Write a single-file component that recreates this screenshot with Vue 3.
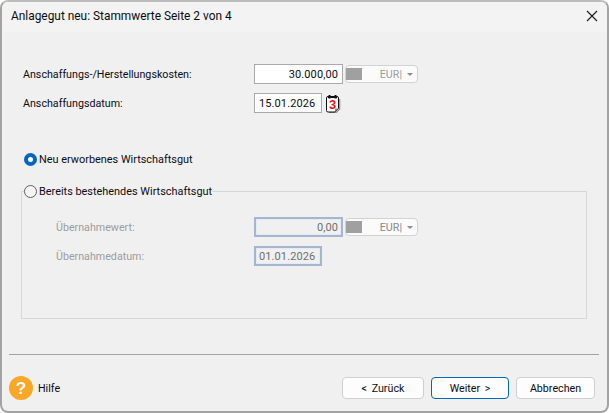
<script setup>
const buttons = [
  { label: "< Zurück", cls: "btn--back" },
  { label: "Weiter >", cls: "btn--next" },
  { label: "Abbrechen", cls: "btn--cancel" },
];
</script>

<template>
  <div class="win">
    <header class="win__title">
      <span>Anlagegut neu: Stammwerte Seite 2 von 4</span>
      <svg class="win__close" width="12" height="12" viewBox="0 0 12 12">
        <path d="M1 1L11 11M11 1L1 11" stroke="#1a1a1a" stroke-width="1.1" fill="none" />
      </svg>
    </header>

    <main class="win__body">
      <div class="row row--first">
        <label class="row__label">Anschaffungs-/Herstellungskosten:</label>
        <div class="field field--money">30.000,00</div>
        <div class="combo">
          <i class="combo__swatch"></i>
          <span class="combo__text">EUR|</span>
          <i class="combo__arrow"></i>
        </div>
      </div>
      <div class="row row--date">
        <label class="row__label">Anschaffungsdatum:</label>
        <div class="field field--date">15.01.2026</div>
        <svg class="cal" width="18" height="20" viewBox="0 0 18 20">
          <path d="M15.7 6V16L12 19.7H5" fill="none" stroke="#8f8f8f" stroke-width="1.2" />
          <path d="M2.5 5Q2.5 3.5 4 3.5H13Q14.5 3.5 14.5 5V15.5L11 19H4Q2.5 19 2.5 17.5Z" fill="#fff" stroke="#111" stroke-width="1" />
          <path d="M11 19V15.5H14.5Z" fill="#8a8a8a" />
          <path d="M4 4.2H13" stroke="#111" stroke-width="1.4" />
          <path d="M5.5 2V5.5M11.5 2V5.5" stroke="#111" stroke-width="2" />
          <text x="8.5" y="15.5" class="cal__num">3</text>
        </svg>
      </div>

      <div class="radio radio--new">
        <i class="radio__dot radio__dot--on"></i>
        <span class="radio__text">Neu erworbenes Wirtschaftsgut</span>
      </div>

      <fieldset class="group">
        <legend class="radio radio--old">
          <i class="radio__dot"></i>
          <span class="radio__text">Bereits bestehendes Wirtschaftsgut</span>
        </legend>
        <div class="row row--off">
          <label class="row__label row__label--sub">Übernahmewert:</label>
          <div class="field field--money field--off">0,00</div>
          <div class="combo combo--off">
            <i class="combo__swatch"></i>
            <span class="combo__text">EUR|</span>
            <i class="combo__arrow"></i>
          </div>
        </div>
        <div class="row row--off row--off2">
          <label class="row__label row__label--sub">Übernahmedatum:</label>
          <div class="field field--date field--off">01.01.2026</div>
        </div>
      </fieldset>

      <hr class="sep" />

      <footer class="foot">
        <div class="help">
          <svg width="24" height="24" viewBox="0 0 24 24">
            <circle cx="12" cy="12" r="12" fill="#f9a726" />
            <text x="12" y="18" class="help__mark">?</text>
          </svg>
          <span>Hilfe</span>
        </div>
        <div class="foot__btns">
          <button v-for="b in buttons" :key="b.label" type="button" class="btn" :class="b.cls">
            {{ b.label }}
          </button>
        </div>
      </footer>
    </main>
  </div>
</template>

<style scoped>
.win {
  width: 609px;
  height: 413px;
  box-sizing: border-box;
  display: flex;
  flex-direction: column;
  border: 2px solid #a3a3a3;
  border-top-color: #bdbdbd;
  border-radius: 8px;
  background: #f0f0f0;
  font-family: Roboto, "Noto Sans", sans-serif;
  font-size: 10.7px;
  color: #0b0b14;
  overflow: hidden;
}

.win__title {
  height: 30px;
  flex: none;
  display: flex;
  align-items: center;
  justify-content: space-between;
  padding: 0 9px 2px 9px;
  box-sizing: border-box;
  background: #f3f3f3;
  font-size: 11.9px;
}

.win__body {
  flex: 1;
  display: flex;
  flex-direction: column;
  padding: 0 4px 0 7px;
  min-height: 0;
}

.row {
  display: flex;
  align-items: center;
  height: 20px;
  padding-left: 14px;
}

.row--first {
  margin-top: 32px;
}

.row--date {
  margin-top: 9px;
}

.row__label {
  width: 231px;
  flex: none;
}

.row__label--sub {
  color: #9d9d9d;
  width: 198px;
}

.field {
  box-sizing: border-box;
  height: 20px;
  display: flex;
  align-items: center;
  border: 1px solid #a9a9a9;
  background: #fff;
  padding: 0 4px;
  font-size: 11px;
  letter-spacing: 0.1px;
}

.field--money {
  width: 89px;
  justify-content: flex-end;
}

.field--date {
  width: 68px;
}

.field--off {
  border: 2px solid #a6b6cf;
  box-shadow: inset 0 0 0 1px #e3eaf3;
  background: #f0f0f0;
  color: #6f6f6f;
  padding: 0 3px;
}

.combo {
  box-sizing: border-box;
  width: 73px;
  height: 18px;
  margin-left: 2px;
  display: flex;
  align-items: center;
  border: 1px solid #d2d2d2;
  border-radius: 4px;
  background: #fbfbfb;
  color: #9d9d9d;
}

.combo__swatch {
  width: 16px;
  height: 12px;
  background: #a0a0a0;
  flex: none;
}

.combo__text {
  margin-left: auto;
}

.combo__arrow {
  width: 0;
  height: 0;
  margin: 0 4px 0 5px;
  border: 3px solid transparent;
  border-top: 3px solid #8c8c8c;
  border-bottom: 0;
}

.combo--off {
  color: #8a8a8a;
}

.cal {
  margin-left: 2px;
  flex: none;
}

.cal__num {
  font-family: "Liberation Sans", sans-serif;
  font-size: 13px;
  font-weight: 700;
  fill: #f01010;
  text-anchor: middle;
}

.radio {
  display: flex;
  align-items: center;
  gap: 2px;
  height: 18px;
  font-size: 10.9px;
}

.radio__text {
  padding-top: 1px;
}

.radio__dot {
  box-sizing: border-box;
  width: 13px;
  height: 13px;
  border-radius: 50%;
  border: 1px solid #5f5f5f;
  background: #f4f4f4;
  flex: none;
}

.radio__dot--on {
  border: 4px solid #0067c0;
  background: #fff;
}

.radio--new {
  margin: 37px 0 0 15px;
}

.group {
  box-sizing: border-box;
  margin: 14px 16px 0 12px;
  padding: 0;
  height: 137px;
  border: 1px solid #d7d7d7;
  min-width: 0;
}

.radio--old {
  margin-left: 2px;
  padding: 0;
}

.row--off {
  margin-top: 17px;
  padding-left: 34px;
}

.row--off2 {
  margin-top: 9px;
}

.sep {
  margin: 35px 4px 0 0;
  border: 0;
  border-top: 1px solid #a3a3a3;
  width: auto;
}

.foot {
  display: flex;
  align-items: center;
  justify-content: space-between;
  margin-top: 21px;
}

.help {
  display: flex;
  align-items: center;
  gap: 5px;
}

.help__mark {
  font-family: "Liberation Sans", sans-serif;
  font-size: 17px;
  font-weight: 700;
  fill: #fff;
  text-anchor: middle;
}

.foot__btns {
  display: flex;
  gap: 7px;
  margin-right: 8px;
}

.btn {
  box-sizing: border-box;
  height: 22px;
  padding: 0;
  border: 1px solid #d0d0d0;
  border-radius: 4px;
  background: #fdfdfd;
  color: #0b0b14;
  font: inherit;
  word-spacing: 2px;
}

.btn--back {
  width: 82px;
}

.btn--next {
  width: 78px;
  border-color: #0067c0;
}

.btn--cancel {
  width: 79px;
}
</style>

<style>
html,
body {
  margin: 0;
  background: #fff;
}
</style>
